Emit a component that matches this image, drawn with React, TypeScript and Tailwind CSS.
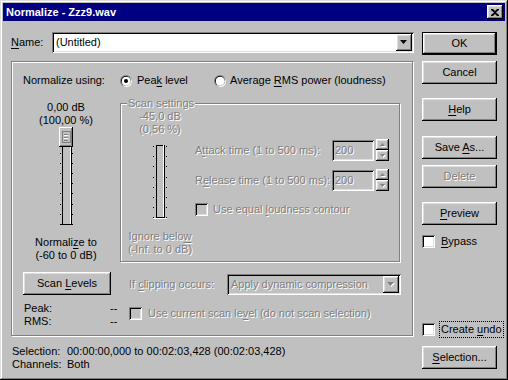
import React from "react";

const raised =
  "shadow-[inset_-1px_-1px_#000,inset_1px_1px_#fff,inset_-2px_-2px_#808080,inset_2px_2px_#dfdfdf]";
const defBtn =
  "shadow-[inset_0_0_0_1px_#000,inset_-2px_-2px_#000,inset_2px_2px_#fff,inset_-3px_-3px_#808080,inset_3px_3px_#dfdfdf]";
const sunken =
  "shadow-[inset_1px_1px_#808080,inset_-1px_-1px_#fff,inset_2px_2px_#000,inset_-2px_-2px_#dfdfdf]";
const etched = "border border-[#808080] shadow-[inset_1px_1px_#fff,1px_1px_#fff]";
const dis = "text-[#808080] [text-shadow:1px_1px_0_#fff]";

function U({ children }: { children: React.ReactNode }) {
  return <span className="underline decoration-1 underline-offset-[2px]">{children}</span>;
}

function Btn({
  children,
  className = "",
  def = false,
  disabled = false,
  w = "w-[75px]",
}: {
  children: React.ReactNode;
  className?: string;
  def?: boolean;
  disabled?: boolean;
  w?: string;
}) {
  return (
    <div
      className={`${w} h-[23px] shrink-0 flex items-center justify-center bg-[#c0c0c0] ${
        def ? defBtn : raised
      } ${disabled ? dis : ""} ${className}`}
    >
      <span className="whitespace-nowrap">{children}</span>
    </div>
  );
}

function Check({ disabled = false }: { disabled?: boolean }) {
  return (
    <div className={`w-[13px] h-[13px] shrink-0 ${disabled ? "bg-[#c0c0c0]" : "bg-white"} ${sunken}`} />
  );
}

function Radio({ checked = false }: { checked?: boolean }) {
  return (
    <svg width="12" height="12" className="block shrink-0">
      <circle cx="6" cy="6" r="6" fill="#808080" />
      <circle cx="6.6" cy="6.6" r="5.4" fill="#fff" />
      <circle cx="6" cy="6" r="5" fill="#000" />
      <circle cx="6.4" cy="6.4" r="4.6" fill="#dfdfdf" />
      <circle cx="6" cy="6" r="4" fill="#fff" />
      {checked && <circle cx="6" cy="6" r="2" fill="#000" />}
    </svg>
  );
}

function DownArrow({ disabled = false }: { disabled?: boolean }) {
  return (
    <svg width="8" height="5" className="block">
      {disabled && <path d="M1 1h7l-3.5 4z" fill="#fff" />}
      <path d="M0 0h7l-3.5 4z" fill={disabled ? "#808080" : "#000"} />
    </svg>
  );
}

function Spinner() {
  return (
    <div className="flex flex-col w-[13px] h-[22px] ml-[2px] -mt-[1px]">
      <div className={`h-[11px] bg-[#c0c0c0] flex items-center justify-center ${raised}`}>
        <svg width="6" height="4" className="block">
          <path d="M1 4h5l-2.5-3z" fill="#fff" />
          <path d="M0 3h5L2.5 0z" fill="#808080" />
        </svg>
      </div>
      <div className={`h-[11px] bg-[#c0c0c0] flex items-center justify-center ${raised}`}>
        <svg width="6" height="4" className="block">
          <path d="M1 1h5l-2.5 3z" fill="#fff" />
          <path d="M0 0h5L2.5 3z" fill="#808080" />
        </svg>
      </div>
    </div>
  );
}

function MainSlider() {
  const ticks = [6, 16, 26, 36, 46, 56, 66, 77, 87, 97];
  return (
    <svg width="16" height="99" className="block">
      {ticks.map((y) => (
        <g key={y}>
          <rect x="2" y={y} width="1" height="1" fill="#000" />
          <rect x="14" y={y} width="1" height="1" fill="#000" />
        </g>
      ))}
      <rect x="4" y="10" width="10" height="88" fill="#c0c0c0" />
      <rect x="4" y="10" width="1" height="88" fill="#000" />
      <rect x="12" y="10" width="1" height="88" fill="#fff" />
      <rect x="13" y="10" width="1" height="88" fill="#000" />
      <rect x="2" y="97" width="13" height="1" fill="#000" />
      <rect x="1" y="0" width="14" height="20" fill="#c0c0c0" />
      <rect x="1" y="0" width="14" height="1" fill="#fff" />
      <rect x="1" y="0" width="1" height="20" fill="#fff" />
      <rect x="1" y="19" width="14" height="1" fill="#000" />
      <rect x="14" y="0" width="1" height="20" fill="#000" />
      <rect x="2" y="18" width="12" height="1" fill="#808080" />
      <rect x="13" y="1" width="1" height="18" fill="#808080" />
      <rect x="4" y="4" width="8" height="11" fill="none" stroke="#808080" strokeWidth="1" transform="translate(0.5 0.5)" />
      <rect x="6" y="7" width="4" height="1" fill="#808080" />
      <rect x="6" y="10" width="4" height="1" fill="#808080" />
      <rect x="6" y="13" width="4" height="1" fill="#808080" />
      <rect x="6" y="8" width="4" height="1" fill="#fff" />
      <rect x="6" y="11" width="4" height="1" fill="#fff" />
    </svg>
  );
}

function ScanSlider() {
  const ticks = [1, 11, 21, 32, 42, 52, 62, 72];
  return (
    <svg width="16" height="74" className="block">
      {ticks.map((y) => (
        <g key={y}>
          <rect x="1" y={y} width="1" height="1" fill="#000" />
          <rect x="14" y={y} width="1" height="1" fill="#000" />
        </g>
      ))}
      <rect x="4" y="0" width="9" height="73" fill="#c0c0c0" />
      <rect x="4" y="0" width="9" height="1" fill="#000" />
      <rect x="4" y="0" width="1" height="73" fill="#000" />
      <rect x="11" y="0" width="1" height="73" fill="#fff" />
      <rect x="12" y="0" width="1" height="73" fill="#000" />
      <rect x="4" y="72" width="9" height="1" fill="#000" />
      <rect x="1" y="73" width="14" height="1" fill="#fff" />
    </svg>
  );
}

export default function App() {
  return (
    <div
      className="w-[508px] h-[380px] bg-[#c0c0c0] p-[3px] flex flex-col overflow-hidden text-black text-[11px] leading-[13px] font-['Liberation_Sans',Arial,sans-serif] shadow-[inset_-1px_-1px_#000,inset_1px_1px_#dfdfdf,inset_-2px_-2px_#808080,inset_2px_2px_#fff]"
    >
      <div className="h-[18px] shrink-0 bg-[#000080] flex items-center justify-between pl-[3px] pr-[2px]">
        <span className="text-white font-bold">Normalize - Zzz9.wav</span>
        <div className={`w-[16px] h-[14px] bg-[#c0c0c0] flex items-center justify-center ${raised}`}>
          <svg width="8" height="7" className="block">
            <path d="M0 0h2l2 2 2-2h2v1L5 3.5 8 6v1H6L4 5 2 7H0V6l3-2.5L0 1z" fill="#000" />
          </svg>
        </div>
      </div>

      <div className="flex pl-[8px] pt-[11px]">
        <div className="w-[403px] flex flex-col">
          <div className="flex items-center h-[21px]">
            <span className="w-[41px]">
              <U>N</U>ame:
            </span>
            <div className={`w-[362px] h-[21px] bg-white flex items-center pl-[4px] pr-[2px] ${sunken}`}>
              <span className="flex-1">(Untitled)</span>
              <div className={`w-[16px] h-[17px] bg-[#c0c0c0] flex items-center justify-center ${raised}`}>
                <DownArrow />
              </div>
            </div>
          </div>

          <div className={`mt-[8px] w-[402px] h-[275px] flex flex-col ${etched}`}>
            <div className="mt-[12px] pl-[11px] h-[13px] flex items-center">
              <span className="w-[97px]">Normalize using:</span>
              <div className="w-[94px] flex items-center gap-[5px]">
                <Radio checked />
                <span>
                  Pea<U>k</U> level
                </span>
              </div>
              <div className="flex items-center gap-[4px]">
                <Radio />
                <span>
                  Average <U>R</U>MS power (loudness)
                </span>
              </div>
            </div>

            <div className="flex">
              <div className="w-[108px] flex flex-col items-center">
                <div className="mt-[14px] text-center">
                  <div>0,00 dB</div>
                  <div>(100,00 %)</div>
                </div>
                <MainSlider />
                <div className="mt-[10px] text-center">
                  <div>
                    Normali<U>z</U>e to
                  </div>
                  <div>(-60 to 0 dB)</div>
                </div>
                <Btn w="w-[88px]" className="self-start ml-[11px] mt-[10px]">
                  Scan <U>L</U>evels
                </Btn>
                <div className="self-stretch mt-[7px] pl-[12px]">
                  <div className="flex">
                    <span className="w-[86px]">Peak:</span>
                    <span>--</span>
                  </div>
                  <div className="flex">
                    <span className="w-[86px]">RMS:</span>
                    <span>--</span>
                  </div>
                </div>
              </div>

              <div className="w-[281px] flex flex-col">
                <div className={`relative mt-[16px] w-[280px] h-[159px] flex ${etched}`}>
                  <span className={`absolute -top-[7px] left-[6px] bg-[#c0c0c0] px-[1px] ${dis}`}>
                    Scan settings
                  </span>
                  <div className={`w-[74px] pl-[4px] flex flex-col items-center ${dis}`}>
                    <div className="mt-[6px] text-center">
                      <div>-45,0 dB</div>
                      <div>(0,56 %)</div>
                    </div>
                    <div className="mt-[9px]">
                      <ScanSlider />
                    </div>
                    <div className="mt-[11px] text-center">
                      <div>
                        Ignore belo<U>w</U>
                      </div>
                      <div>(-Inf. to 0 dB)</div>
                    </div>
                  </div>
                  <div className="flex flex-col">
                    <div className="mt-[36px] h-[21px] flex items-center">
                      <span className={`w-[137px] ${dis}`}>
                        A<U>t</U>tack time (1 to 500 ms):
                      </span>
                      <div className={`w-[42px] h-[21px] pl-[3px] flex items-center bg-[#c0c0c0] ${sunken} ${dis}`}>
                        200
                      </div>
                      <Spinner />
                    </div>
                    <div className="mt-[9px] h-[21px] flex items-center">
                      <span className={`w-[137px] ${dis}`}>
                        R<U>e</U>lease time (1 to 500 ms):
                      </span>
                      <div className={`w-[42px] h-[21px] pl-[3px] flex items-center bg-[#c0c0c0] ${sunken} ${dis}`}>
                        200
                      </div>
                      <Spinner />
                    </div>
                    <div className="mt-[12px] h-[13px] flex items-center gap-[5px]">
                      <Check disabled />
                      <span className={dis}>
                        Use equal <U>l</U>oudness contour
                      </span>
                    </div>
                  </div>
                </div>

                <div className="mt-[12px] h-[21px] pl-[9px] flex items-center">
                  <span className={`w-[98px] ${dis}`}>
                    If <U>c</U>lipping occurs:
                  </span>
                  <div className={`w-[174px] h-[21px] bg-[#c0c0c0] flex items-center pl-[4px] pr-[2px] ${sunken}`}>
                    <span className={`flex-1 ${dis}`}>Apply dynamic compression</span>
                    <div className={`w-[16px] h-[17px] bg-[#c0c0c0] flex items-center justify-center ${raised}`}>
                      <DownArrow disabled />
                    </div>
                  </div>
                </div>
                <div className="mt-[12px] h-[13px] pl-[9px] flex items-center gap-[6px]">
                  <Check disabled />
                  <span className={dis}>
                    Use current scan le<U>v</U>el (do not scan selection)
                  </span>
                </div>
              </div>
            </div>
          </div>

          <div className="mt-[9px] pl-[1px]">
            <div className="flex">
              <span className="w-[55px]">Selection:</span>
              <span>00:00:00,000 to 00:02:03,428 (00:02:03,428)</span>
            </div>
            <div className="flex">
              <span className="w-[55px]">Channels:</span>
              <span>Both</span>
            </div>
          </div>
        </div>

        <div className="ml-[8px] w-[75px] flex flex-col">
          <Btn def>OK</Btn>
          <Btn className="mt-[6px]">Cancel</Btn>
          <Btn className="mt-[14px]">
            <U>H</U>elp
          </Btn>
          <Btn className="mt-[15px]">
            Save <U>A</U>s...
          </Btn>
          <Btn className="mt-[6px]" disabled>
            Delete
          </Btn>
          <Btn className="mt-[14px]">
            <U>P</U>review
          </Btn>
          <div className="mt-[10px] h-[13px] flex items-center gap-[6px]">
            <Check />
            <span>
              <U>B</U>ypass
            </span>
          </div>
          <div className="mt-[75px] h-[13px] flex items-center gap-[4px] whitespace-nowrap">
            <Check />
            <span className="border border-dotted border-black px-[1px] leading-[15px] whitespace-nowrap">
              Create <U>u</U>ndo
            </span>
          </div>
          <Btn className="mt-[10px]">
            <U>S</U>election...
          </Btn>
        </div>
      </div>
    </div>
  );
}
